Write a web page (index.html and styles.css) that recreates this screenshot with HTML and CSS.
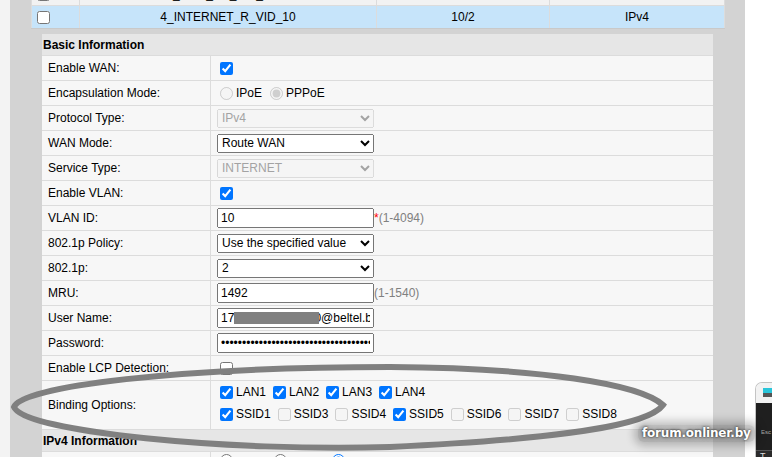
FILE: index.html
```html
<!DOCTYPE html>
<html>
<head>
<meta charset="utf-8">
<link rel="stylesheet" href="styles.css">
</head>
<body>
<div class="page">
  <div class="edge"></div>
  <div class="main">
    <table class="list">
      <colgroup><col class="k1"><col class="k2"><col class="k3"><col class="k4"></colgroup>
      <tr class="prev"><td><input type="checkbox"></td><td>3_IPTV_BR_VID_4000</td><td></td><td></td></tr>
      <tr class="cur"><td><input type="checkbox"></td><td>4_INTERNET_R_VID_10</td><td>10/2</td><td>IPv4</td></tr>
    </table>
    <div class="panel">
      <div class="sect">Basic Information</div>
      <div class="row"><div class="lab">Enable WAN:</div><div class="val"><input type="checkbox" checked></div></div>
      <div class="row"><div class="lab">Encapsulation Mode:</div><div class="val"><label><input type="radio" name="enc" disabled>IPoE</label> <label class="gap"><input type="radio" name="enc" checked disabled>PPPoE</label></div></div>
      <div class="row"><div class="lab">Protocol Type:</div><div class="val"><select disabled><option>IPv4</option></select></div></div>
      <div class="row"><div class="lab">WAN Mode:</div><div class="val"><select><option>Route WAN</option></select></div></div>
      <div class="row"><div class="lab">Service Type:</div><div class="val"><select disabled><option>INTERNET</option></select></div></div>
      <div class="row"><div class="lab">Enable VLAN:</div><div class="val"><input type="checkbox" checked></div></div>
      <div class="row"><div class="lab">VLAN ID:</div><div class="val"><input type="text" value="10"><span class="star">*</span><span class="hint">(1-4094)</span></div></div>
      <div class="row"><div class="lab">802.1p Policy:</div><div class="val"><select><option>Use the specified value</option></select></div></div>
      <div class="row"><div class="lab">802.1p:</div><div class="val"><select><option>2</option></select></div></div>
      <div class="row"><div class="lab">MRU:</div><div class="val"><input type="text" value="1492"><span class="hint">(1-1540)</span></div></div>
      <div class="row"><div class="lab">User Name:</div><div class="val"><span class="redact"><input type="text" value="170000000000000@beltel.by"><span class="blot"></span></span></div></div>
      <div class="row"><div class="lab">Password:</div><div class="val"><input type="password" value="abcdefghijabcdefghijabcdefghijabcdefghij"></div></div>
      <div class="row"><div class="lab">Enable LCP Detection:</div><div class="val"><input type="checkbox"></div></div>
      <div class="row tall"><div class="lab">Binding Options:</div><div class="val lines">
        <div class="line"><label><input type="checkbox" checked>LAN1</label> <label><input type="checkbox" checked>LAN2</label> <label><input type="checkbox" checked>LAN3</label> <label><input type="checkbox" checked>LAN4</label></div>
        <div class="line"><label><input type="checkbox" checked>SSID1</label> <label><input type="checkbox" disabled>SSID3</label> <label><input type="checkbox" disabled>SSID4</label> <label><input type="checkbox" checked>SSID5</label> <label><input type="checkbox" disabled>SSID6</label> <label><input type="checkbox" disabled>SSID7</label> <label><input type="checkbox" disabled>SSID8</label></div>
      </div></div>
      <div class="sect">IPv4 Information</div>
      <div class="row"><div class="lab"><span class="low">IP Acquisition Mode:</span></div><div class="val top"><label><input type="radio" name="ip"><span class="low">Static</span></label> <label class="gap"><input type="radio" name="ip"><span class="low">DHCP</span></label> <label class="gap"><input type="radio" name="ip" checked><span class="low">PPPoE</span></label></div></div>
    </div>
  </div>
  <div class="side">
    <div class="kbd">
      <div class="kbd-top"><span class="kbd-ico"></span></div>
      <div class="kbd-body"><span class="esc">Esc</span></div>
      <div class="kbd-row">T</div>
    </div>
  </div>
  <svg class="ring" width="772" height="457" viewBox="0 0 772 457">
    <path d="M14,407 C22,386 180,367 390,367 C540,368 640,384 663,405 C648,426 560,439 390,447 C230,452 24,432 14,407 Z" fill="none" stroke="#808080" stroke-width="6"/>
  </svg>
  <div class="mark">forum.onliner.by</div>
</div>
</body>
</html>
```
FILE: styles.css
```css
* { box-sizing: border-box; }
html, body { margin: 0; padding: 0; }
body {
  width: 772px;
  height: 457px;
  overflow: hidden;
  background: #fff;
  font-family: "Liberation Sans", Arial, sans-serif;
  font-size: 12px;
  color: #000;
}
.page { position: relative; display: flex; height: 457px; overflow: hidden; }
.edge { width: 10px; flex: none; background: #f3f3f3; }
.main { width: 735px; flex: none; background: #d3d3d3; padding: 0 21px; }
.side { flex: 1; background: #fff; padding-top: 382px; padding-left: 10px; overflow: hidden; }

.list { width: 693px; border-collapse: collapse; table-layout: fixed; margin-top: -18px; }
.list col.k1 { width: 48px; }
.list col.k2 { width: 297px; }
.list col.k3 { width: 173px; }
.list col.k4 { width: 175px; }
.list td { height: 23px; padding: 0; text-align: center; border: 1px solid #dcdcdc; }
.list tr.prev td { background: #f2f2f2; }
.list tr.cur td { background: #c6e4fa; border-bottom: 1px solid #c9c9c9; }
.list td:first-child { text-align: left; padding-left: 1px; }
.list input { margin: 3px 3px 3px 4px; vertical-align: middle; }

.panel { margin: 5px 11px 0; width: 671px; background: #f7f7f7; }
.sect { height: 22px; background: #e6e6e6; border-bottom: 1px solid #dcdcdc; font-weight: bold; padding-left: 1px; display: flex; align-items: center; }
.row { display: grid; grid-template-columns: 169px 1fr; height: 25px; border-bottom: 1px solid #dcdcdc; }
.row.tall { height: 49px; }
.lab { border-right: 1px solid #dcdcdc; padding-left: 6px; display: flex; align-items: center; }
.val { padding-left: 5px; display: flex; align-items: center; white-space: nowrap; }
.val.top { align-items: flex-start; padding-top: 0; }
.val.top input[type=radio] { margin-top: 2px; }
.val label { display: inline-flex; align-items: center; }
.val.top label { align-items: flex-start; }
.low { display: inline-block; padding-top: 7px; }
.val .gap { margin-left: 4px; }
.val input[type=checkbox], .val input[type=radio] { margin: 3px 3px 3px 4px; width: 13px; height: 13px; }
.lines { flex-direction: column; align-items: flex-start; justify-content: flex-start; }
.line { height: 22px; display: flex; align-items: center; }
.line label { margin-right: 3px; }

select {
  margin: 0 0 0 1px;
  width: 157px;
  height: 19px;
  font-family: "Liberation Sans", Arial, sans-serif;
  font-size: 12px;
}
input[type=text], input[type=password] {
  margin: 0 0 0 1px;
  width: 157px;
  height: 20px;
  padding: 0 2px;
  font-family: "Liberation Sans", Arial, sans-serif;
  font-size: 12px;
}
.star { color: #ff0000; font-size: 12px; }
.hint { color: #808080; }
.redact { position: relative; display: inline-block; }
.blot { position: absolute; left: 18px; top: 4px; width: 85px; height: 12px; background: #808080; }

.kbd { width: 30px; border: 1px solid #c4c4c4; border-right: 0; border-radius: 7px 0 0 0; overflow: hidden; }
.kbd-top { height: 20px; background: #f2f2f2; padding: 5px 0 0 7px; }
.kbd-ico { display: block; width: 12px; height: 9px; background: linear-gradient(#29c5d9 0 60%, #555 60% 100%); }
.kbd-body { height: 47px; background: #1f1f1f; padding: 26px 0 0 5px; }
.esc { display: block; color: #aaa; font-size: 6px; }
.kbd-row { height: 10px; background: #2b2b2b; border-top: 1px solid #555; color: #ddd; font-size: 9px; padding-left: 4px; }

.ring { position: absolute; left: 0; top: 0; pointer-events: none; }
.mark {
  position: absolute;
  left: 638px;
  top: 425px;
  padding: 1px 4px 2px;
  border-radius: 6px;
  background: rgba(0,0,0,.22);
  box-shadow: 0 0 8px 4px rgba(0,0,0,.22);
  color: #fff;
  font-family: "DejaVu Sans", Verdana, sans-serif;
  font-weight: bold;
  font-size: 12px;
  letter-spacing: -0.2px;
  text-shadow: 0 0 2px rgba(0,0,0,.8), 0 0 5px rgba(0,0,0,.5);
}
```
